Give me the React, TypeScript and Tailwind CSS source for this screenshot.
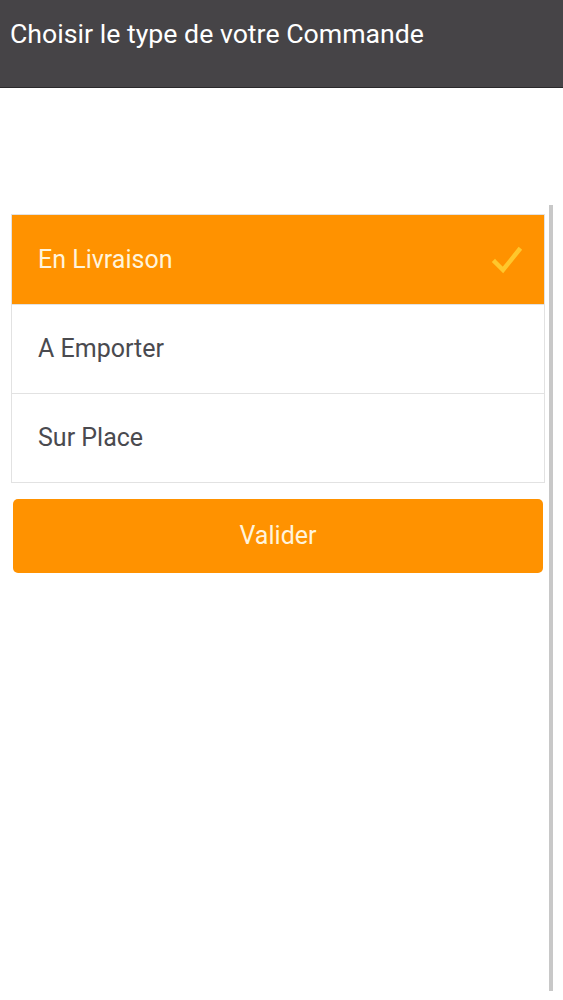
const options = ["En Livraison", "A Emporter", "Sur Place"];

export default function App() {
  const selected = 0;

  return (
    <div className="relative min-h-[1000px] bg-white font-['Roboto',sans-serif]">
      <header className="h-[88px] bg-[#464447] border-b border-[#2a292b] pl-[10px] pt-[17px]">
        <h1 className="text-[26.7px] leading-[34px] text-white font-normal">
          Choisir le type de votre Commande
        </h1>
      </header>

      <div className="pt-[126px] pl-[11px] pr-[18px]">
        <ul className="border border-[#e2e2e2]">
          {options.map((label, i) => (
            <li
              key={label}
              className={
                i === selected
                  ? "h-[89px] flex items-center justify-between pl-[26px] pr-[20px] bg-[#ff9200] text-[#fff4dc]"
                  : "h-[89px] flex items-center pl-[26px] border-t border-[#e2e2e2] text-[#4a4a4f]"
              }
            >
              <span className="text-[25px]">{label}</span>
              {i === selected && (
                <svg width="34" height="30" viewBox="0 0 34 30" fill="none">
                  <path
                    d="M5 17 L13 25 L29 5"
                    stroke="#ffc72c"
                    strokeWidth="4.5"
                    strokeLinecap="square"
                  />
                </svg>
              )}
            </li>
          ))}
        </ul>

        <button className="mt-[16px] ml-[2px] w-[530px] h-[74px] rounded-[5px] bg-[#ff9200] text-[#fff4dc] text-[25px]">
          Valider
        </button>
      </div>

      {/* scroll indicator */}
      <div className="absolute left-[549px] top-[205px] w-[4px] h-[786px] bg-[#c8c8c8]" />
    </div>
  );
}
